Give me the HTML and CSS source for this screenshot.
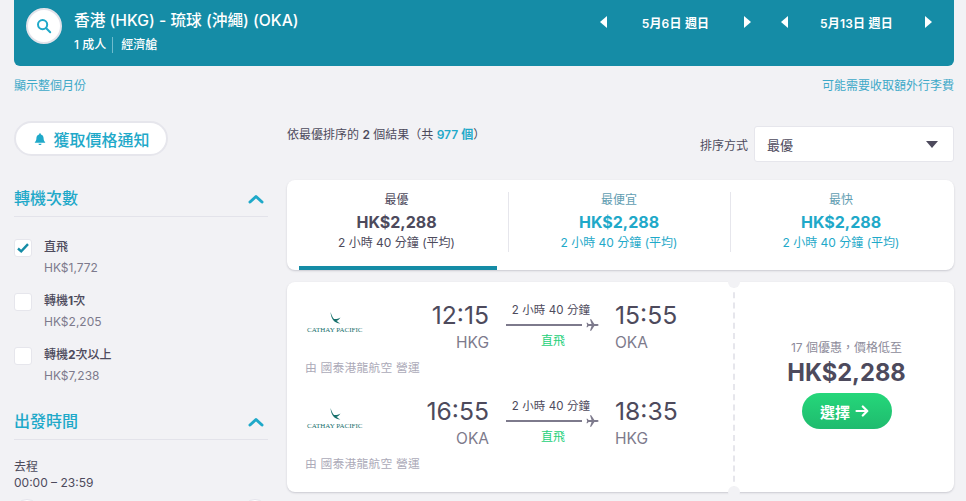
FILE: index.html
```html
<!DOCTYPE html>
<html lang="zh-Hant">
<head>
<meta charset="utf-8">
<title>香港 - 琉球</title>
<link rel="stylesheet" href="styles.css">
</head>
<body>
<div class="page">
  <header class="topbar">
    <div class="search-circle">
      <svg width="16" height="16" viewBox="0 0 16 16" fill="none" stroke="#1fa9c9" stroke-width="2" stroke-linecap="round"><circle cx="6.6" cy="6.6" r="4.6"/><path d="M10.2 10.2 14.2 14.2"/></svg>
    </div>
    <div class="route-info">
      <div class="route-title">香港 (HKG) - 琉球 (沖繩) (OKA)</div>
      <div class="route-sub"><span class="pax">1 成人</span><span class="cabin">經濟艙</span></div>
    </div>
    <div class="dates">
      <div class="date-nav"><i class="tri tri-l"></i><span class="date-text">5月6日 週日</span><i class="tri tri-r"></i></div>
      <div class="date-nav"><i class="tri tri-l"></i><span class="date-text">5月13日 週日</span><i class="tri tri-r"></i></div>
    </div>
  </header>

  <div class="links">
    <a class="link">顯示整個月份</a>
    <a class="link">可能需要收取額外行李費</a>
  </div>

  <div class="columns">
    <aside class="sidebar">
      <button class="alert-btn">
        <svg width="12" height="14" viewBox="0 0 14 15" fill="#1fa9c9"><path d="M7 .8c.6 0 1 .4 1 1v.5c2 .5 3.2 2.2 3.2 4.2 0 2.300.6 3.500 1.800 4.500v.9H1v-.9c1.200-1 1.800-2.200 1.800-4.500 0-2 1.200-3.700 3.200-4.200v-.5c0-.6.4-1 1-1z"/><path d="M5.200 13h3.600c0 1-.8 1.600-1.800 1.600S5.200 14 5.200 13z"/></svg>
        <span>獲取價格通知</span>
      </button>

      <section class="filter stops">
        <div class="filter-head">
          <h3>轉機次數</h3>
          <svg class="chev" width="16" height="10" viewBox="0 0 16 10" fill="none" stroke="#1fa9c9" stroke-width="3" stroke-linecap="round" stroke-linejoin="round"><path d="M2 8 8 2.500 14 8"/></svg>
        </div>
        <div class="opt">
          <span class="box"><svg width="12" height="10" viewBox="0 0 12 10" fill="none" stroke="#158ca6" stroke-width="2.400"><path d="M1 5.500 4.200 8.300 11 1.200"/></svg></span>
          <div><div class="opt-name">直飛</div><div class="opt-price">HK$1,772</div></div>
        </div>
        <div class="opt">
          <span class="box"></span>
          <div><div class="opt-name">轉機<b>1</b>次</div><div class="opt-price">HK$2,205</div></div>
        </div>
        <div class="opt">
          <span class="box"></span>
          <div><div class="opt-name">轉機<b>2</b>次以上</div><div class="opt-price">HK$7,238</div></div>
        </div>
      </section>

      <section class="filter">
        <div class="filter-head">
          <h3>出發時間</h3>
          <svg class="chev" width="16" height="10" viewBox="0 0 16 10" fill="none" stroke="#1fa9c9" stroke-width="3" stroke-linecap="round" stroke-linejoin="round"><path d="M2 8 8 2.500 14 8"/></svg>
        </div>
        <div class="time-label">去程</div>
        <div class="time-range">00:00 – 23:59</div>
        <div class="slider"><span class="knob"></span><span class="knob"></span></div>
      </section>
    </aside>

    <main class="results">
      <div class="results-head">
        <div class="count">依最優排序的 <b>2</b> 個結果（共 <b class="accent">977 個</b>）</div>
        <div class="sort">
          <span class="sort-label">排序方式</span>
          <div class="select"><span>最優</span><i class="caret"></i></div>
        </div>
      </div>

      <div class="tabs">
        <div class="tab active">
          <div class="tab-name">最優</div>
          <div class="tab-price">HK$2,288</div>
          <div class="tab-time">2 小時 40 分鐘 (平均)</div>
        </div>
        <div class="tab">
          <div class="tab-name">最便宜</div>
          <div class="tab-price">HK$2,288</div>
          <div class="tab-time">2 小時 40 分鐘 (平均)</div>
        </div>
        <div class="tab">
          <div class="tab-name">最快</div>
          <div class="tab-price">HK$2,288</div>
          <div class="tab-time">2 小時 40 分鐘 (平均)</div>
        </div>
      </div>

      <article class="ticket">
        <div class="legs">
          <div class="leg">
            <div class="logo">
              <svg width="11" height="12" viewBox="0 0 11 12" fill="#17706c"><path d="M.6 0C1.400 2.600 2.300 5 4 6.900 6 7.300 8 6.800 10.500 5.400 9.200 7.200 8 8.300 6.500 8.800 7.500 9.800 8.800 10.600 10.300 11.400 7.500 11.200 4.600 10 3.100 7.900 1.500 5.700.6 2.800.6 0z"/></svg>
              <span class="logo-text">CATHAY PACIFIC</span>
            </div>
            <div class="dep"><div class="clock">12:15</div><div class="code">HKG</div></div>
            <div class="path">
              <div class="dur">2 小時 40 分鐘</div>
              <div class="line-wrap"><span class="line"></span><svg width="14" height="14" viewBox="0 0 14 14" fill="#7d7a8c"><path d="M13.500 7c0-.6-.6-1-1.300-1H9L5.600.8H4.300L6 6H2.800L1.600 4.500H.5L1.300 7 .5 9.500h1.100L2.800 8H6l-1.700 5.200h1.300L9 8h3.200c.7 0 1.300-.4 1.300-1z"/></svg></div>
              <div class="direct">直飛</div>
            </div>
            <div class="arr"><div class="clock">15:55</div><div class="code">OKA</div></div>
            <div class="operator">由 國泰港龍航空 營運</div>
          </div>
          <div class="leg">
            <div class="logo">
              <svg width="11" height="12" viewBox="0 0 11 12" fill="#17706c"><path d="M.6 0C1.400 2.600 2.300 5 4 6.900 6 7.300 8 6.800 10.500 5.400 9.200 7.200 8 8.300 6.500 8.800 7.500 9.800 8.800 10.600 10.300 11.400 7.500 11.200 4.600 10 3.100 7.900 1.500 5.700.6 2.800.6 0z"/></svg>
              <span class="logo-text">CATHAY PACIFIC</span>
            </div>
            <div class="dep"><div class="clock">16:55</div><div class="code">OKA</div></div>
            <div class="path">
              <div class="dur">2 小時 40 分鐘</div>
              <div class="line-wrap"><span class="line"></span><svg width="14" height="14" viewBox="0 0 14 14" fill="#7d7a8c"><path d="M13.500 7c0-.6-.6-1-1.300-1H9L5.600.8H4.300L6 6H2.800L1.600 4.500H.5L1.300 7 .5 9.500h1.100L2.800 8H6l-1.700 5.200h1.300L9 8h3.200c.7 0 1.300-.4 1.300-1z"/></svg></div>
              <div class="direct">直飛</div>
            </div>
            <div class="arr"><div class="clock">18:35</div><div class="code">HKG</div></div>
            <div class="operator">由 國泰港龍航空 營運</div>
          </div>
        </div>
        <div class="offer">
          <span class="notch notch-top"></span>
          <span class="notch notch-bottom"></span>
          <div class="offer-note">17 個優惠，價格低至</div>
          <div class="offer-price">HK$2,288</div>
          <button class="select-btn">選擇
            <svg width="14" height="12" viewBox="0 0 14 12" fill="none" stroke="#fff" stroke-width="2.200" stroke-linecap="round" stroke-linejoin="round"><path d="M1.500 6h10.500M7.800 1.500 12.300 6 7.800 10.500"/></svg>
          </button>
        </div>
      </article>
    </main>
  </div>
</div>
</body>
</html>
```
FILE: styles.css
```css
* { box-sizing: border-box; }
html, body { margin: 0; height: 501px; overflow: hidden; }
body {
  background: #f2f2f5;
  color: #4d4a5c;
  font-family: Inter, "Noto Sans CJK TC", sans-serif;
  font-size: 12px;
}
.page { height: 501px; overflow: hidden; padding: 0 12px 0 14px; }

.topbar {
  height: 66px;
  background: #158ca6;
  border-radius: 0 0 6px 6px;
  color: #fff;
  display: flex;
  align-items: flex-start;
  padding: 8px 12px 0 12px;
}
.search-circle {
  width: 36px;
  height: 36px;
  border-radius: 50%;
  background: #fff;
  border: 2px solid #e3e3ea;
  display: flex;
  align-items: center;
  justify-content: center;
  flex: none;
}
.route-info { margin-left: 12px; }
.route-title { font-size: 15.700px; font-weight: 500; line-height: 24px; margin-top: 1px; }
.route-sub { display: flex; font-size: 12px; font-weight: 500; line-height: 16px; margin-top: 4px; }
.pax { padding-right: 6px; border-right: 1px solid #6fbccd; }
.cabin { padding-left: 8px; }
.dates { margin-left: auto; display: flex; gap: 30px; margin-top: 6px; margin-right: 10px; }
.date-nav { display: flex; align-items: center; justify-content: space-between; height: 16px; width: 151px; }
.date-text { font-size: 12px; font-weight: 600; letter-spacing: .2px; }
.tri { width: 0; height: 0; border-top: 6px solid transparent; border-bottom: 6px solid transparent; }
.tri-l { border-right: 7px solid #fff; }
.tri-r { border-left: 7px solid #fff; }

.links { display: flex; justify-content: space-between; margin-top: 12px; height: 16px; line-height: 16px; }
.link { color: #3ea9c8; font-size: 12px; }

.columns { display: flex; gap: 19px; margin-top: 27px; }
.sidebar { width: 254px; flex: none; }
.alert-btn {
  width: 154px;
  height: 35px;
  background: #fff;
  border: 2px solid #e6e6ec;
  border-radius: 18px;
  display: flex;
  align-items: center;
  justify-content: center;
  gap: 7px;
  padding: 0 0 0 2px;
  color: #1fa9c9;
  font: 500 16px Inter, "Noto Sans CJK TC", sans-serif;
}
.filter-head {
  display: flex;
  align-items: center;
  justify-content: space-between;
  height: 29px;
  border-bottom: 1px solid #e3e3ea;
  padding-right: 4px;
}
.filter-head h3 { margin: 0; font-size: 16px; font-weight: 500; color: #1fa9c9; line-height: 24px; position: relative; top: -4px; }
.chev { position: relative; top: -3px; }
.stops { margin-top: 32px; padding-bottom: 11px; }
.stops .filter-head { margin-bottom: 21px; }
.opt { display: flex; gap: 12px; height: 54px; }
.box {
  width: 18px;
  height: 18px;
  margin-top: 1px;
  background: #fff;
  border: 1px solid #e6e6ec;
  border-radius: 3px;
  display: flex;
  align-items: center;
  justify-content: center;
  flex: none;
}
.opt-name { font-size: 12px; line-height: 18px; font-weight: 500; }
.opt-name b { font-weight: 700; }
.opt-price { color: #7d7a8c; font-size: 12px; line-height: 16px; margin-top: 4px; }
.time-label { font-size: 12px; line-height: 16px; margin-top: 19px; }
.time-range { font-size: 12px; line-height: 16px; }
.slider { display: flex; justify-content: space-between; margin-top: 8px; }
.knob { width: 26px; height: 26px; border-radius: 50%; background: #fff; border: 1px solid #e3e3ea; }

.results { flex: 1; min-width: 0; }
.results-head { display: flex; justify-content: space-between; align-items: flex-start; height: 59px; padding-top: 5px; }
.count { font-size: 12px; line-height: 16px; margin-top: 1px; }
.count b { font-weight: 600; }
.accent { color: #1fa9c9; }
.sort { display: flex; align-items: center; gap: 6px; }
.sort-label { font-size: 12px; }
.select {
  width: 200px;
  height: 36px;
  background: #fff;
  border: 1px solid #e6e6ec;
  border-radius: 3px;
  display: flex;
  align-items: center;
  justify-content: space-between;
  padding: 0 15px 0 12px;
  font-size: 13px;
}
.caret { width: 0; height: 0; border-left: 6.500px solid transparent; border-right: 6.500px solid transparent; border-top: 7px solid #4d4a5c; }

.tabs {
  height: 90px;
  background: #fff;
  border-radius: 8px;
  box-shadow: 0 1px 2px rgba(60, 60, 80, .22);
  display: flex;
  padding: 0 1px 0 12px;
}
.tab { width: 222px; margin-top: 12px; height: 60px; padding-right: 1px; text-align: center; position: relative; border-left: 1px solid #e6e6ec; color: #1fa9c9; }
.tab.active { width: 209px; border-left: none; color: #4d4a5c; padding-right: 14px; }
.tab.active::after { content: ""; position: absolute; left: 0; top: 74px; width: 198px; height: 4px; background: #158ca6; }
.tab-name { font-size: 12px; line-height: 16px; }
.tab:not(.active) .tab-name { color: #5f9db1; }
.tab-price { font-size: 16px; font-weight: 700; line-height: 20px; margin-top: 4px; }
.tab-time { font-size: 12px; line-height: 18px; margin-top: 2px; }

.ticket {
  height: 210px;
  margin-top: 12px;
  background: #fff;
  border-radius: 8px;
  box-shadow: 0 1px 2px rgba(60, 60, 80, .22);
  display: flex;
}
.legs { width: 447px; flex: none; padding-top: 18px; }
.leg {
  height: 96px;
  display: grid;
  grid-template-columns: 136px 66px 110px 1fr;
  grid-template-rows: 56px 24px;
}
.logo { padding-left: 20px; display: flex; flex-direction: column; align-items: flex-start; padding-top: 12px; }
.logo svg { margin-left: 23px; }
.logo-text { font-family: "Liberation Serif", serif; font-size: 7px; line-height: 8px; color: #17706c; white-space: nowrap; margin-top: 2px; }
.dep { text-align: right; }
.arr { text-align: left; padding-left: 16px; }
.clock { font-size: 24.700px; line-height: 30px; color: #4d4a5c; }
.code { font-size: 15.500px; line-height: 20px; color: #7d7a8c; margin-top: 3px; }
.path { padding-left: 17px; text-align: center; }
.dur { font-size: 11.500px; line-height: 16px; width: 84px; white-space: nowrap; margin-left: 3px; padding-top: 2px; height: 18px; letter-spacing: .1px; }
.line-wrap { display: flex; align-items: center; gap: 4px; height: 14px; }
.line { width: 82px; height: 2px; background: #7d7a8c; }
.direct { color: #25d07a; font-size: 12px; line-height: 16px; width: 94px; margin-top: 1px; }
.operator { grid-column: 1 / -1; padding-left: 18px; color: #acaab8; font-size: 11.800px; line-height: 16px; letter-spacing: .2px; margin-top: 4px; }

.offer {
  flex: 1;
  position: relative;
  border-left: 2px dashed #e6e6ec;
  margin-left: -1px;
  display: flex;
  flex-direction: column;
  align-items: center;
  padding: 58px 0 0 4px;
}
.notch { position: absolute; left: -7px; width: 12px; height: 12px; border-radius: 50%; background: #f2f2f5; }
.notch-top { top: -6px; }
.notch-bottom { bottom: -6px; }
.offer-note { color: #8d8b9a; font-size: 12px; line-height: 16px; }
.offer-price { font-size: 23.700px; font-weight: 700; line-height: 30px; margin-top: 2px; }
.select-btn {
  width: 90px;
  height: 36px;
  margin-top: 5px;
  border: none;
  border-radius: 18px;
  background: linear-gradient(#25d77a, #1fbb6e);
  color: #fff;
  font: 700 15px Inter, "Noto Sans CJK TC", sans-serif;
  display: flex;
  align-items: center;
  justify-content: center;
  gap: 5px;
  padding: 0 4px 0 0;
}
```
